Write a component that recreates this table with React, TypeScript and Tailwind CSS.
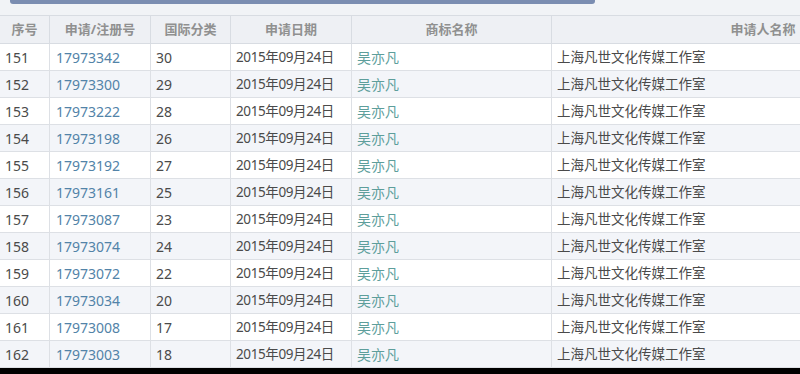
import React from "react";

const rows = [
  ["151", "17973342", "30"],
  ["152", "17973300", "29"],
  ["153", "17973222", "28"],
  ["154", "17973198", "26"],
  ["155", "17973192", "27"],
  ["156", "17973161", "25"],
  ["157", "17973087", "23"],
  ["158", "17973074", "24"],
  ["159", "17973072", "22"],
  ["160", "17973034", "20"],
  ["161", "17973008", "17"],
  ["162", "17973003", "18"],
];

const cols = "grid grid-cols-[50px_101px_80px_121px_200px_422px]";

export default function App() {
  return (
    <div
      className="relative w-[800px] h-[374px] overflow-hidden bg-[#f1f3f6]"
      style={{ fontFamily: '"Noto Sans", "Noto Sans CJK SC", sans-serif' }}
    >
      <div className="ml-[10px] w-[585px] h-[4px] rounded-b-[3px] bg-[#7b8db1]" />
      <div className="mt-[11px] w-[974px] border-t border-[#d8dce2]">
        <div className={`${cols} h-[28px] bg-[#eef0f4] border-b border-[#d8dce2] text-[13px] font-bold text-[#909090]`}>
          {["序号", "申请/注册号", "国际分类", "申请日期", "商标名称", "申请人名称"].map((h, i) => (
            <div
              key={h}
              className={`flex items-center justify-center ${i < 5 ? "border-r border-[#d8dce2]" : ""}`}
            >
              {h}
            </div>
          ))}
        </div>
        {rows.map((r, idx) => (
          <div
            key={r[0]}
            className={`${cols} h-[27px] border-b border-[#dde0e5] text-[14px] text-[#4a4a4a] ${
              idx % 2 === 0 ? "bg-white" : "bg-[#f3f5f9]"
            }`}
          >
            <div className="flex items-center pl-[5px] border-r border-[#dde0e5]">{r[0]}</div>
            <div className="flex items-center pl-[6px] border-r border-[#dde0e5] text-[#5283a8]">{r[1]}</div>
            <div className="flex items-center pl-[5px] border-r border-[#dde0e5]">{r[2]}</div>
            <div className="flex items-center pl-[5px] border-r border-[#dde0e5] text-[13.5px] tracking-[-0.4px] whitespace-nowrap">
              2015年09月24日
            </div>
            <div className="flex items-center pl-[5px] border-r border-[#dde0e5] text-[#5d9e9b]">吴亦凡</div>
            <div className="flex items-center pl-[5px] text-[13.5px]">上海凡世文化传媒工作室</div>
          </div>
        ))}
      </div>
      <div className="absolute left-0 right-0 bottom-0 h-[6px] bg-black" />
    </div>
  );
}
